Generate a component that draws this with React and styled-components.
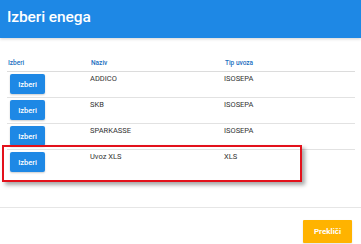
import React from "react";
import styled, { createGlobalStyle } from "styled-components";

const GlobalStyle = createGlobalStyle`
  html, body {
    margin: 0;
    padding: 0;
    background: #fff;
  }
  body {
    font-family: Roboto, "Liberation Sans", Arial, sans-serif;
  }
`;

const Dialog = styled.div`
  position: relative;
  width: 361px;
  height: 244px;
  background: #fff;
  display: flex;
  flex-direction: column;
  overflow: hidden;
`;

const Header = styled.div`
  height: 38px;
  background: #1e88e5;
  box-shadow: 0 1px 3px rgba(0, 0, 0, 0.18);
  display: flex;
  align-items: center;
  padding: 0 0 4px 7px;
  box-sizing: border-box;
`;

const Title = styled.h1`
  margin: 0;
  color: #fff;
  font-size: 15.5px;
  font-weight: 500;
  letter-spacing: -0.1px;
`;

const Body = styled.div`
  flex: 1;
  padding: 21px 9px 0 7px;
`;

const Table = styled.table`
  width: 345px;
  border-collapse: collapse;
  table-layout: fixed;
`;

const Th = styled.th`
  width: ${(p) => p.$w}px;
  text-align: left;
  font-size: 6.5px;
  line-height: 8px;
  font-weight: 500;
  color: #1a6ec0;
  padding: 0 0 4px 1px;
  border-bottom: 1px solid #dcdcdc;
`;

const Tr = styled.tr`
  border-bottom: 1px solid ${(p) => (p.$last ? "transparent" : "#e2e2e2")};
`;

const Td = styled.td`
  vertical-align: top;
  font-size: 7.5px;
  color: #333;
  padding: 2px 0 3px 0;
  height: 20px;
  line-height: 10px;
  box-sizing: content-box;
`;

const PickButton = styled.button`
  display: flex;
  align-items: center;
  justify-content: center;
  width: 35px;
  height: 20px;
  margin: 0 0 0 3px;
  border: none;
  border-radius: 2px;
  background: #1e88e5;
  color: #fff;
  font-family: inherit;
  font-size: 7.5px;
  font-weight: 500;
  box-shadow: 0 1px 2px rgba(0, 0, 0, 0.2);
  padding: 0;
`;

const Footer = styled.div`
  border-top: 1px solid #e6e6e6;
  height: 37px;
  display: flex;
  justify-content: flex-end;
  align-items: flex-start;
  padding: 12px 9px 0 0;
  box-sizing: border-box;
`;

const CancelButton = styled.button`
  width: 49px;
  height: 23px;
  border: none;
  border-radius: 1px;
  background: #ffb300;
  color: #fff;
  font-family: inherit;
  font-size: 8px;
  font-weight: 700;
  padding: 0;
  box-shadow: 0 1px 2px rgba(0, 0, 0, 0.12);
`;

const Highlight = styled.div`
  position: absolute;
  left: 2px;
  top: 145px;
  width: 300px;
  height: 37px;
  box-sizing: border-box;
  border: 2px solid #e3111b;
  box-shadow: 3px 3px 4px rgba(0, 0, 0, 0.35);
  pointer-events: none;
`;

const rows = [
  { name: "ADDICO", type: "ISOSEPA" },
  { name: "SKB", type: "ISOSEPA" },
  { name: "SPARKASSE", type: "ISOSEPA" },
  { name: "Uvoz XLS", type: "XLS" },
];

export default function App() {
  return (
    <>
      <GlobalStyle />
      <Dialog>
        <Header>
          <Title>Izberi enega</Title>
        </Header>
        <Body>
          <Table>
            <thead>
              <tr>
                <Th $w={82}>Izberi</Th>
                <Th $w={133}>Naziv</Th>
                <Th $w={130}>Tip uvoza</Th>
              </tr>
            </thead>
            <tbody>
              {rows.map((r, i) => (
                <Tr key={r.name} $last={i === rows.length - 1}>
                  <Td>
                    <PickButton>Izberi</PickButton>
                  </Td>
                  <Td>{r.name}</Td>
                  <Td>{r.type}</Td>
                </Tr>
              ))}
            </tbody>
          </Table>
        </Body>
        <Footer>
          <CancelButton>Prekliči</CancelButton>
        </Footer>
        <Highlight />
      </Dialog>
    </>
  );
}
